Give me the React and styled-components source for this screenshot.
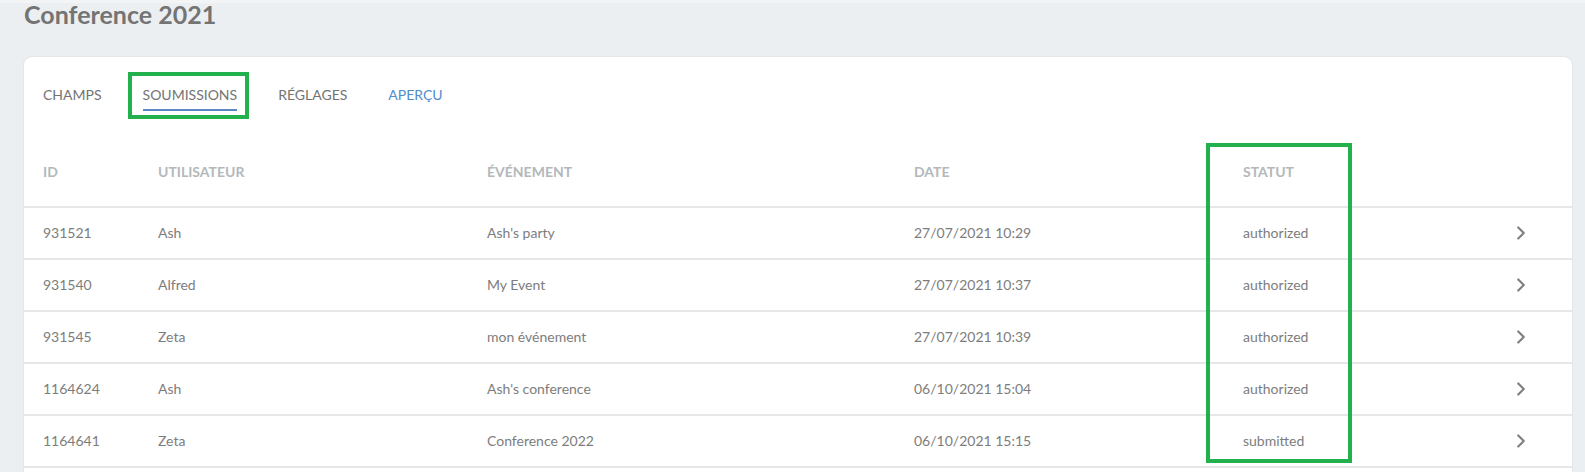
import React from 'react';
import styled, { createGlobalStyle } from 'styled-components';
import { ChevronRight } from 'lucide-react';

const GlobalStyle = createGlobalStyle`
  html, body {
    margin: 0;
    padding: 0;
    background: #eceff1;
    overflow: hidden;
  }

  body {
    font-family: Lato, 'Open Sans', 'Liberation Sans', sans-serif;
    -webkit-font-smoothing: antialiased;
  }
`;

const Page = styled.div`
  box-sizing: border-box;
  height: 472px;
  overflow: hidden;
  padding: 0 13px 0 24px;
  background: linear-gradient(#f3f4f5 0, #f3f4f5 3px, #eceff1 3px);
`;

const Title = styled.h1`
  margin: 0 0 28px;
  font-size: 25px;
  line-height: 29px;
  font-weight: 700;
  color: #747474;
`;

const Card = styled.div`
  background: #fff;
  border-radius: 8px;
  box-shadow: 0 0 2px rgba(0, 0, 0, 0.12);
  padding: 28px 0 40px;
`;

const Tabs = styled.nav`
  display: flex;
  gap: 41px;
  padding-left: 19px;
`;

const Tab = styled.span`
  position: relative;
  font-size: 14px;
  line-height: 20px;
  text-transform: uppercase;
  color: ${({ $link }) => ($link ? '#4f8ccc' : '#737373')};
  padding-bottom: 4px;
  border-bottom: 2px solid ${({ $active }) => ($active ? '#5b87c4' : 'transparent')};
`;

const Highlight = styled.span`
  position: absolute;
  border: 4px solid #22b14c;
  pointer-events: none;
`;

const TabHighlight = styled(Highlight)`
  left: -15px;
  right: -12px;
  top: -13px;
  bottom: -10px;
`;

const ColumnHighlight = styled(Highlight)`
  left: -37px;
  top: 7px;
  width: 146px;
  height: 320px;
  box-sizing: border-box;
`;

const Table = styled.div`
  margin-top: 25px;
`;

const Row = styled.div`
  display: grid;
  grid-template-columns: 115px 329px 427px 329px 1fr 24px;
  align-items: center;
  box-sizing: border-box;
  height: ${({ $head }) => ($head ? '72px' : '52px')};
  padding: 0 38px 0 19px;
  border-bottom: 2px solid #e5e7e9;
`;

const HeadCell = styled.div`
  position: ${({ $mark }) => ($mark ? 'relative' : 'static')};
  align-self: stretch;
  display: flex;
  align-items: center;
  font-size: 14px;
  font-weight: 700;
  text-transform: uppercase;
  color: #b3b8bb;
`;

const Cell = styled.div`
  font-size: 14px;
  line-height: 20px;
  color: #7d7d7d;
  white-space: nowrap;
`;

const Arrow = styled.div`
  display: flex;
  align-items: center;
  color: #808080;
`;

const submissions = [
  { id: '931521', user: 'Ash', event: "Ash's party", date: '27/07/2021 10:29', status: 'authorized' },
  { id: '931540', user: 'Alfred', event: 'My Event', date: '27/07/2021 10:37', status: 'authorized' },
  { id: '931545', user: 'Zeta', event: 'mon événement', date: '27/07/2021 10:39', status: 'authorized' },
  { id: '1164624', user: 'Ash', event: "Ash's conference", date: '06/10/2021 15:04', status: 'authorized' },
  { id: '1164641', user: 'Zeta', event: 'Conference 2022', date: '06/10/2021 15:15', status: 'submitted' },
];

const App = () => (
  <>
    <GlobalStyle />
    <Page>
      <Title>Conference 2021</Title>
      <Card>
        <Tabs>
          <Tab>Champs</Tab>
          <Tab $active>
            Soumissions
            <TabHighlight />
          </Tab>
          <Tab>Réglages</Tab>
          <Tab $link>Aperçu</Tab>
        </Tabs>
        <Table>
          <Row $head>
            <HeadCell>ID</HeadCell>
            <HeadCell>Utilisateur</HeadCell>
            <HeadCell>Événement</HeadCell>
            <HeadCell>Date</HeadCell>
            <HeadCell $mark>
              Statut
              <ColumnHighlight />
            </HeadCell>
            <HeadCell />
          </Row>
          {submissions.map((s) => (
            <Row key={s.id}>
              <Cell>{s.id}</Cell>
              <Cell>{s.user}</Cell>
              <Cell>{s.event}</Cell>
              <Cell>{s.date}</Cell>
              <Cell>{s.status}</Cell>
              <Arrow>
                <ChevronRight size={22} strokeWidth={2.4} />
              </Arrow>
            </Row>
          ))}
        </Table>
      </Card>
    </Page>
  </>
);

export default App;
